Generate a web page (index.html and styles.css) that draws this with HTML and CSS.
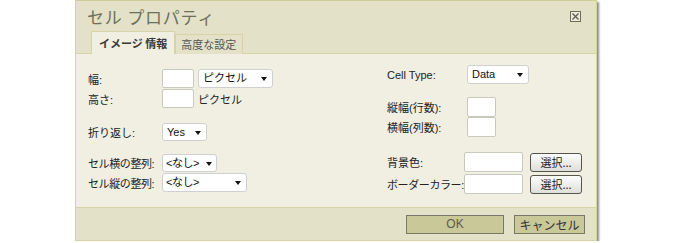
FILE: index.html
```html
<!DOCTYPE html>
<html lang="ja">

<head>
    <meta charset="UTF-8">
    <title>セル プロパティ</title>
    <link rel="stylesheet" href="styles.css">
</head>

<body>
    <div class="dialog">
        <div class="title-bar">
            <div class="title-row">
                <span class="title">セル プロパティ</span>
                <span class="close">
                    <svg viewBox="0 0 11 11" width="11" height="11">
                        <rect x="0.5" y="0.5" width="10" height="10" fill="#ecebd8" stroke="#6e6e5e" />
                        <path d="M2.5,2.5 L8.5,8.5 M8.5,2.5 L2.5,8.5" stroke="#5a5a4a" stroke-width="1.2" />
                    </svg>
                </span>
            </div>
            <div class="tabs">
                <div class="tab active">イメージ 情報</div>
                <div class="tab">高度な設定</div>
            </div>
        </div>

        <div class="content">
            <div class="col col-left">
                <div class="row r1">
                    <span class="label">幅:</span>
                    <span class="input w32"></span>
                    <span class="select sel-unit">ピクセル</span>
                </div>
                <div class="row r2">
                    <span class="label">高さ:</span>
                    <span class="input w32"></span>
                    <span class="unit">ピクセル</span>
                </div>
                <div class="row r3">
                    <span class="label">折り返し:</span>
                    <span class="select sel-yes">Yes</span>
                </div>
                <div class="row r4">
                    <span class="label tight">セル横の整列:</span>
                    <span class="select sel-h">&lt;なし&gt;</span>
                </div>
                <div class="row r5">
                    <span class="label tight">セル縦の整列:</span>
                    <span class="select sel-v">&lt;なし&gt;</span>
                </div>
            </div>
            <div class="col col-right">
                <div class="row q1">
                    <span class="label label-r">Cell Type:</span>
                    <span class="select sel-type">Data</span>
                </div>
                <div class="row q2">
                    <span class="label label-r">縦幅(行数):</span>
                    <span class="input w29 tall"></span>
                </div>
                <div class="row q3">
                    <span class="label label-r">横幅(列数):</span>
                    <span class="input w29 tall"></span>
                </div>
                <div class="row q4">
                    <span class="label label-c">背景色:</span>
                    <span class="input w59 tall"></span>
                    <button class="pick">選択...</button>
                </div>
                <div class="row q5">
                    <span class="label label-c tight">ボーダーカラー:</span>
                    <span class="input w59 tall"></span>
                    <button class="pick">選択...</button>
                </div>
            </div>
        </div>

        <div class="footer">
            <button class="btn ok">OK</button>
            <button class="btn cancel">キャンセル</button>
        </div>
    </div>
</body>

</html>
```

FILE: styles.css
```css
body {
    margin: 0;
    background-color: #fff;
    font-family: "Liberation Sans", "Noto Sans CJK JP", sans-serif;
    font-size: 11px;
    color: #222;
}

.dialog {
    width: 520px;
    margin-left: 75px;
    border: 1px solid #d6d4a6;
    border-top-color: #cfcd9c;
    box-shadow: 2px 2px 2px rgba(0, 0, 0, 0.45);
}

.title-bar {
    height: 52px;
    background-color: #e3e2c8;
    display: flex;
    flex-direction: column;
    justify-content: space-between;
}

.title-row {
    display: flex;
    justify-content: space-between;
    align-items: flex-start;
    padding: 5px 15px 0 11px;
}

.title {
    font-family: "Noto Sans CJK JP", sans-serif;
    font-size: 17px;
    line-height: 22px;
    color: #6f6f5c;
    letter-spacing: 0.8px;
}

.close {
    display: block;
    width: 11px;
    height: 11px;
    margin-top: 5px;
}

.close svg {
    display: block;
}

.tabs {
    display: flex;
    align-items: flex-end;
    padding-left: 15px;
    margin-bottom: -1px;
}

.tab {
    font-family: "Noto Sans CJK JP", sans-serif;
    font-size: 11px;
    height: 19px;
    line-height: 19px;
    padding: 0 6px 0 5px;
    color: #555;
    background-color: #e3e2c8;
    border: 1px solid #d6d4a6;
    border-bottom: none;
}

.tab.active {
    height: 22px;
    line-height: 22px;
    padding: 0 7px;
    font-weight: bold;
    color: #3a3a3a;
    background-color: #f0efe2;
    position: relative;
    z-index: 1;
}

.content {
    height: 153px;
    background-color: #f0efe2;
    border-top: 1px solid #d6d4a6;
    border-bottom: 1px solid #d6d4a6;
    display: flex;
    padding-left: 12px;
}

.col {
    display: flex;
    flex-direction: column;
}

.col-left {
    width: 299px;
    padding-top: 15px;
}

.col-right {
    padding-top: 11px;
}

.row {
    display: flex;
    align-items: center;
    height: 19px;
}

.r2 { margin-top: 1px; }
.r3 { margin-top: 15px; height: 18px; }
.r4 { margin-top: 13px; height: 18px; }
.r5 { margin-top: 1px; }

.q1 { height: 19px; }
.q2 { margin-top: 13px; height: 20px; }
.q3 { height: 20px; }
.q4 { margin-top: 15px; height: 20px; }
.q5 { margin-top: 2px; height: 20px; }

.label {
    width: 74px;
    flex-shrink: 0;
    font-family: "Liberation Sans", "Noto Sans CJK JP", sans-serif;
    white-space: nowrap;
}

.label.tight {
    letter-spacing: -0.4px;
}

.label-r {
    width: 80px;
}

.label-c {
    width: 77px;
}

.input {
    display: block;
    height: 17px;
    background-color: #fff;
    border: 1px solid #c9c9c0;
    border-radius: 2px;
}

.input.tall {
    height: 18px;
}

.w32 { width: 30px; }
.w29 { width: 27px; }
.w59 { width: 57px; }

.unit {
    margin-left: 4px;
}

.select {
    display: block;
    position: relative;
    box-sizing: border-box;
    height: 19px;
    line-height: 17px;
    padding-left: 4px;
    background-color: #fff;
    border: 1px solid #cfd0d4;
    border-radius: 3px;
    color: #111;
    white-space: nowrap;
}

.select::after {
    content: "";
    position: absolute;
    right: 5px;
    top: 7px;
    border-left: 3.5px solid transparent;
    border-right: 3.5px solid transparent;
    border-top: 4px solid #111;
}

.sel-unit { width: 75px; margin-left: 4px; }
.sel-yes { width: 45px; height: 18px; line-height: 16px; }
.sel-h {
    width: 55px;
    height: 18px;
    line-height: 16px;
    padding-left: 3px;
    letter-spacing: -0.5px;
}
.sel-h::after { right: 4px; }
.sel-v { width: 85px; padding-left: 3px; letter-spacing: -0.5px; }
.sel-type { width: 62px; }

.pick {
    box-sizing: border-box;
    width: 52px;
    height: 19px;
    margin-left: 7px;
    padding: 0;
    font-family: "Noto Sans CJK JP", sans-serif;
    font-size: 11px;
    color: #222;
    background: linear-gradient(#fdfdfd, #dededa);
    border: 1px solid #55554d;
    border-radius: 3px;
}

.footer {
    height: 32px;
    background-color: #e3e2c8;
    display: flex;
    justify-content: flex-end;
    align-items: center;
    padding-right: 11px;
}

.btn {
    box-sizing: border-box;
    height: 19px;
    padding: 0;
    font-family: "Liberation Sans", "Noto Sans CJK JP", sans-serif;
    font-size: 12px;
    background-color: #c9c898;
    border: 1px solid #77776a;
    color: #444;
}

.ok {
    width: 98px;
    color: #5b5b4e;
}

.cancel {
    width: 71px;
    margin-left: 10px;
    font-size: 12px;
    color: #333;
}
```
